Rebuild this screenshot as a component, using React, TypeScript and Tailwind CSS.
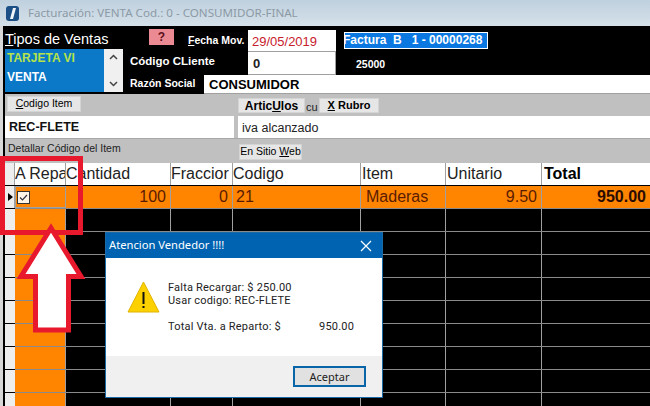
const rows = [0, 1, 2, 3, 4, 5, 6, 7, 8]

function Btn({ children, className }: { children: React.ReactNode; className: string }) {
  return (
    <div className={`flex items-center justify-center bg-[#e6e6e6] border border-[#d4d4d4] text-black ${className}`}>
      {children}
    </div>
  )
}

function Cell({ w, children, className = '' }: { w: string; children?: React.ReactNode; className?: string }) {
  return <div className={`${w} shrink-0 h-full flex items-center border-r border-[#a0a0a0] overflow-hidden whitespace-nowrap ${className}`}>{children}</div>
}

export default function App() {
  return (
    <div className="relative w-[650px] h-[406px] overflow-hidden bg-black font-['Liberation_Sans',sans-serif]">
      {/* barra de titulo */}
      <div className="h-[26px] flex items-center bg-gradient-to-b from-[#bfd0de] to-[#d5e1ea] pl-[6px] gap-[9px]">
        <svg width="13" height="15" viewBox="0 0 13 15">
          <rect x="0" y="0" width="13" height="15" rx="3" fill="#1c4f86" />
          <path d="M7 2 L10 2 L7 13 L4 13 Z" fill="#f0f4f8" />
        </svg>
        <span className="text-[11.6px] text-[#8c9aa5] font-['Noto_Sans',sans-serif]">Facturación: VENTA Cod.: 0 - CONSUMIDOR-FINAL</span>
      </div>

      <div className="flex h-[380px]">
        <div className="w-[3px] bg-[#d8d8d8] shrink-0" />
        <div className="w-[2px] bg-black shrink-0" />
        <div className="flex-1 min-w-0 flex flex-col">
          {/* cabecera negra */}
          <div className="h-[68px] shrink-0 bg-black flex">
            <div className="w-[118px] shrink-0 flex flex-col">
              <div className="h-[23px] pt-[3px] text-[14.5px] leading-[20px] text-white"><span className="underline">T</span>ipos de Ventas</div>
              <div className="h-[43px] flex">
                <div className="w-[99px] bg-[#0b78c8] pl-[2px] text-[12px] font-bold leading-[19px]">
                  <div className="text-[#b6e34a]">TARJETA VI</div>
                  <div className="text-white">VENTA</div>
                </div>
                <div className="w-[19px] bg-[#f0f0f0] flex flex-col justify-between items-center py-[5px] text-[#444]">
                  <svg width="9" height="6" viewBox="0 0 9 6"><path d="M1 5 L4.5 1.5 L8 5" fill="none" stroke="#444" strokeWidth="1.5" /></svg>
                  <svg width="9" height="6" viewBox="0 0 9 6"><path d="M1 1 L4.5 4.5 L8 1" fill="none" stroke="#444" strokeWidth="1.5" /></svg>
                </div>
              </div>
            </div>
            <div className="w-[125px] shrink-0 flex flex-col text-white font-bold text-[10.5px]">
              <div className="h-[24px] flex items-start pt-[3px] pl-[26px]">
                <div className="w-[25px] h-[16px] bg-[#ec8a94] text-[#5a1020] text-[12px] leading-[16px] text-center">?</div>
                <span className="ml-[14px] mt-[5px] leading-[13px] whitespace-nowrap"><span className="underline">F</span>echa Mov.</span>
              </div>
              <div className="h-[24px] flex items-center pl-[7px] text-[11.5px]">Código CLiente</div>
              <div className="h-[20px] flex items-center pl-[7px] whitespace-nowrap">Razón Social</div>
            </div>
            <div className="flex-1 flex flex-col">
              <div className="flex">
                <div className="flex flex-col pt-[4px] w-[88px] shrink-0">
                  <div className="h-[22px] bg-white border-b border-[#a0a0a0] pl-[4px] text-[13px] leading-[24px] text-[#c8202c]">29/05/2019</div>
                  <div className="h-[23px] bg-white border-b border-r border-[#a0a0a0] pl-[5px] text-[13px] font-bold leading-[23px] text-[#222]">0</div>
                </div>
                <div className="pl-[8px] pt-[6px] flex flex-col">
                  <div className="w-[144px] h-[17px] bg-[#0a78e0] border border-white text-[12px] font-bold leading-[15px] text-white whitespace-pre overflow-hidden"><span className="-ml-[2px]">Factura  B   1 - 00000268</span></div>
                  <div className="pl-[12px] pt-[9px] text-[10.5px] font-bold leading-[12px] text-white">25000</div>
                </div>
              </div>
            </div>
          </div>
          {/* razon social: se monta sobre la columna derecha */}
          <div className="h-[22px] shrink-0 bg-[#c0c0c0] flex pt-[4px] relative">
            <div className="absolute left-[199px] right-0 top-[-19px] h-[19px] bg-white border-b border-[#a0a0a0] pl-[5px] text-[13px] font-bold leading-[20px] text-black">CONSUMIDOR</div>
            <Btn className="ml-[2px] w-[74px] h-[16px] text-[10.5px] -mt-[2px]"><span><span className="underline">C</span>odigo Item</span></Btn>
            <Btn className="ml-[157px] w-[67px] h-[15px] text-[12px] font-bold"><span>Artic<span className="underline">U</span>los</span></Btn>
            <span className="w-[14px] pl-[1px] text-[11px] leading-[18px] text-[#222]">cu</span>
            <Btn className="w-[60px] h-[15px] text-[11px] font-bold"><span><span className="underline">X</span> Rubro</span></Btn>
          </div>
          <div className="h-[22px] shrink-0 flex bg-[#c0c0c0]">
            <div className="w-[229px] bg-white text-[12.5px] font-bold leading-[22px] pl-[4px] text-[#111]">REC-FLETE</div>
            <div className="flex-1 ml-[4px] bg-white text-[12.5px] leading-[24px] pl-[4px] text-[#222]">iva alcanzado</div>
          </div>
          <div className="h-[25px] shrink-0 bg-[#c0c0c0] border-t border-[#a8a8a8] flex items-center">
            <span className="w-[234px] pl-[3px] text-[10.5px] text-[#222] pb-[4px]">Detallar Código del Item</span>
            <Btn className="w-[63px] h-[16px] text-[10.5px] mt-[1px]"><span>En Sitio <span className="underline">W</span>eb</span></Btn>
          </div>

          {/* grilla */}
          <div className="h-[22px] shrink-0 bg-white flex text-[16px] text-[#222]">
            <Cell w="w-[10px]" className="bg-[#eeeeee]" />
            <Cell w="w-[51px]">A Repa</Cell>
            <Cell w="w-[105px]">Cantidad</Cell>
            <Cell w="w-[62px]">Fraccior</Cell>
            <Cell w="w-[128px]">Codigo</Cell>
            <Cell w="w-[85px]" className="pl-[1px]">Item</Cell>
            <Cell w="w-[96px]" className="pl-[1px]">Unitario</Cell>
            <Cell w="w-[108px]" className="pl-[2px] font-bold text-black border-r-0">Total</Cell>
          </div>
          <div className="h-[23px] shrink-0 bg-[#ff8400] flex text-[16px] text-[#5a1c00] border-t border-black">
            <Cell w="w-[10px]" className="bg-[#eeeeee]">
              <svg width="5" height="8" viewBox="0 0 5 8" className="ml-[3px]"><path d="M0 0 L5 4 L0 8 Z" fill="#000" /></svg>
            </Cell>
            <Cell w="w-[51px]" className="border border-[#6b7b8c] pl-[1px]">
              <div className="w-[13px] h-[13px] bg-[#fff4e6] border border-[#333] flex items-center justify-center">
                <svg width="11" height="11" viewBox="0 0 11 11"><path d="M2 5.5 L4.5 8 L9 3" fill="none" stroke="#334" strokeWidth="1.2" /></svg>
              </div>
            </Cell>
            <Cell w="w-[105px]" className="justify-end pr-[4px]">100</Cell>
            <Cell w="w-[62px]" className="justify-end pr-[4px]">0</Cell>
            <Cell w="w-[128px]" className="pl-[3px]">21</Cell>
            <Cell w="w-[85px]" className="pl-[5px]">Maderas</Cell>
            <Cell w="w-[96px]" className="justify-end pr-[4px]">9.50</Cell>
            <Cell w="w-[108px]" className="justify-end pr-[4px] font-bold text-[#2a0c00] border-r-0">950.00</Cell>
          </div>
          {rows.map((r) => (
            <div key={r} className="h-[23px] shrink-0 flex border-t border-[#8a8a8a] bg-black">
              <div className="w-[10px] shrink-0 bg-[#eeeeee] border-t border-black -mt-px" />
              <div className="w-[51px] shrink-0 bg-[#ff8400] border-r border-[#a0a0a0]" />
              <Cell w="w-[105px]" />
              <Cell w="w-[62px]" />
              <Cell w="w-[128px]" />
              <Cell w="w-[85px]" />
              <Cell w="w-[96px]" />
              <Cell w="w-[108px]" className="border-r-0" />
            </div>
          ))}
        </div>
      </div>

      {/* anotaciones rojas sobre la captura */}
      <div className="absolute left-0 top-[156px] w-[83px] h-[79px] border-[5px] border-[#e8192c]" />
      <svg className="absolute left-0 top-[210px]" width="100" height="135" viewBox="0 0 100 135">
        <path d="M51 18 L21 66.5 L35.5 66.5 L35.5 120 L68.5 120 L68.5 66.5 L81 66.5 Z" fill="#fff" stroke="#e8192c" strokeWidth="5" />
      </svg>

      {/* dialogo */}
      <div className="absolute left-[105px] top-[232px] w-[278px] h-[166px] flex flex-col border border-[#1a6aa8] bg-white font-['Noto_Sans',sans-serif]">
        <div className="h-[25px] shrink-0 bg-[#0063b1] flex items-center justify-between pl-[3px] pr-[10px] text-[11.2px] text-white">
          <span>Atencion Vendedor !!!!</span>
          <svg width="12" height="12" viewBox="0 0 12 12"><path d="M1 1 L11 11 M11 1 L1 11" stroke="#fff" strokeWidth="1.2" /></svg>
        </div>
        <div className="h-[98px] shrink-0 flex pt-[23px] pl-[21px]">
          <svg width="33" height="33" viewBox="0 0 33 33" className="shrink-0">
            <path d="M16.5 1 L32 31 L1 31 Z" fill="#fdd000" stroke="#e0b400" strokeWidth="1" />
            <rect x="15.5" y="11" width="2" height="12" fill="#111" />
            <rect x="15.5" y="25" width="2" height="2" fill="#111" />
          </svg>
          <div className="ml-[8px] text-[11px] leading-[13px] tracking-[0.2px] text-[#222] font-['Roboto',sans-serif]">
            <div>Falta Recargar: $ 250.00</div>
            <div>Usar codigo: REC-FLETE</div>
            <div className="mt-[13px] flex"><span className="w-[151px]">Total Vta. a Reparto: $</span><span>950.00</span></div>
          </div>
        </div>
        <div className="flex-1 bg-[#f0f0f0] flex justify-end pt-[10px] pr-[16px]">
          <div className="w-[73px] h-[21px] bg-[#e1e1e1] border-2 border-[#0a64a8] text-[11px] leading-[17px] text-center text-[#222]">Aceptar</div>
        </div>
      </div>
    </div>
  )
}
